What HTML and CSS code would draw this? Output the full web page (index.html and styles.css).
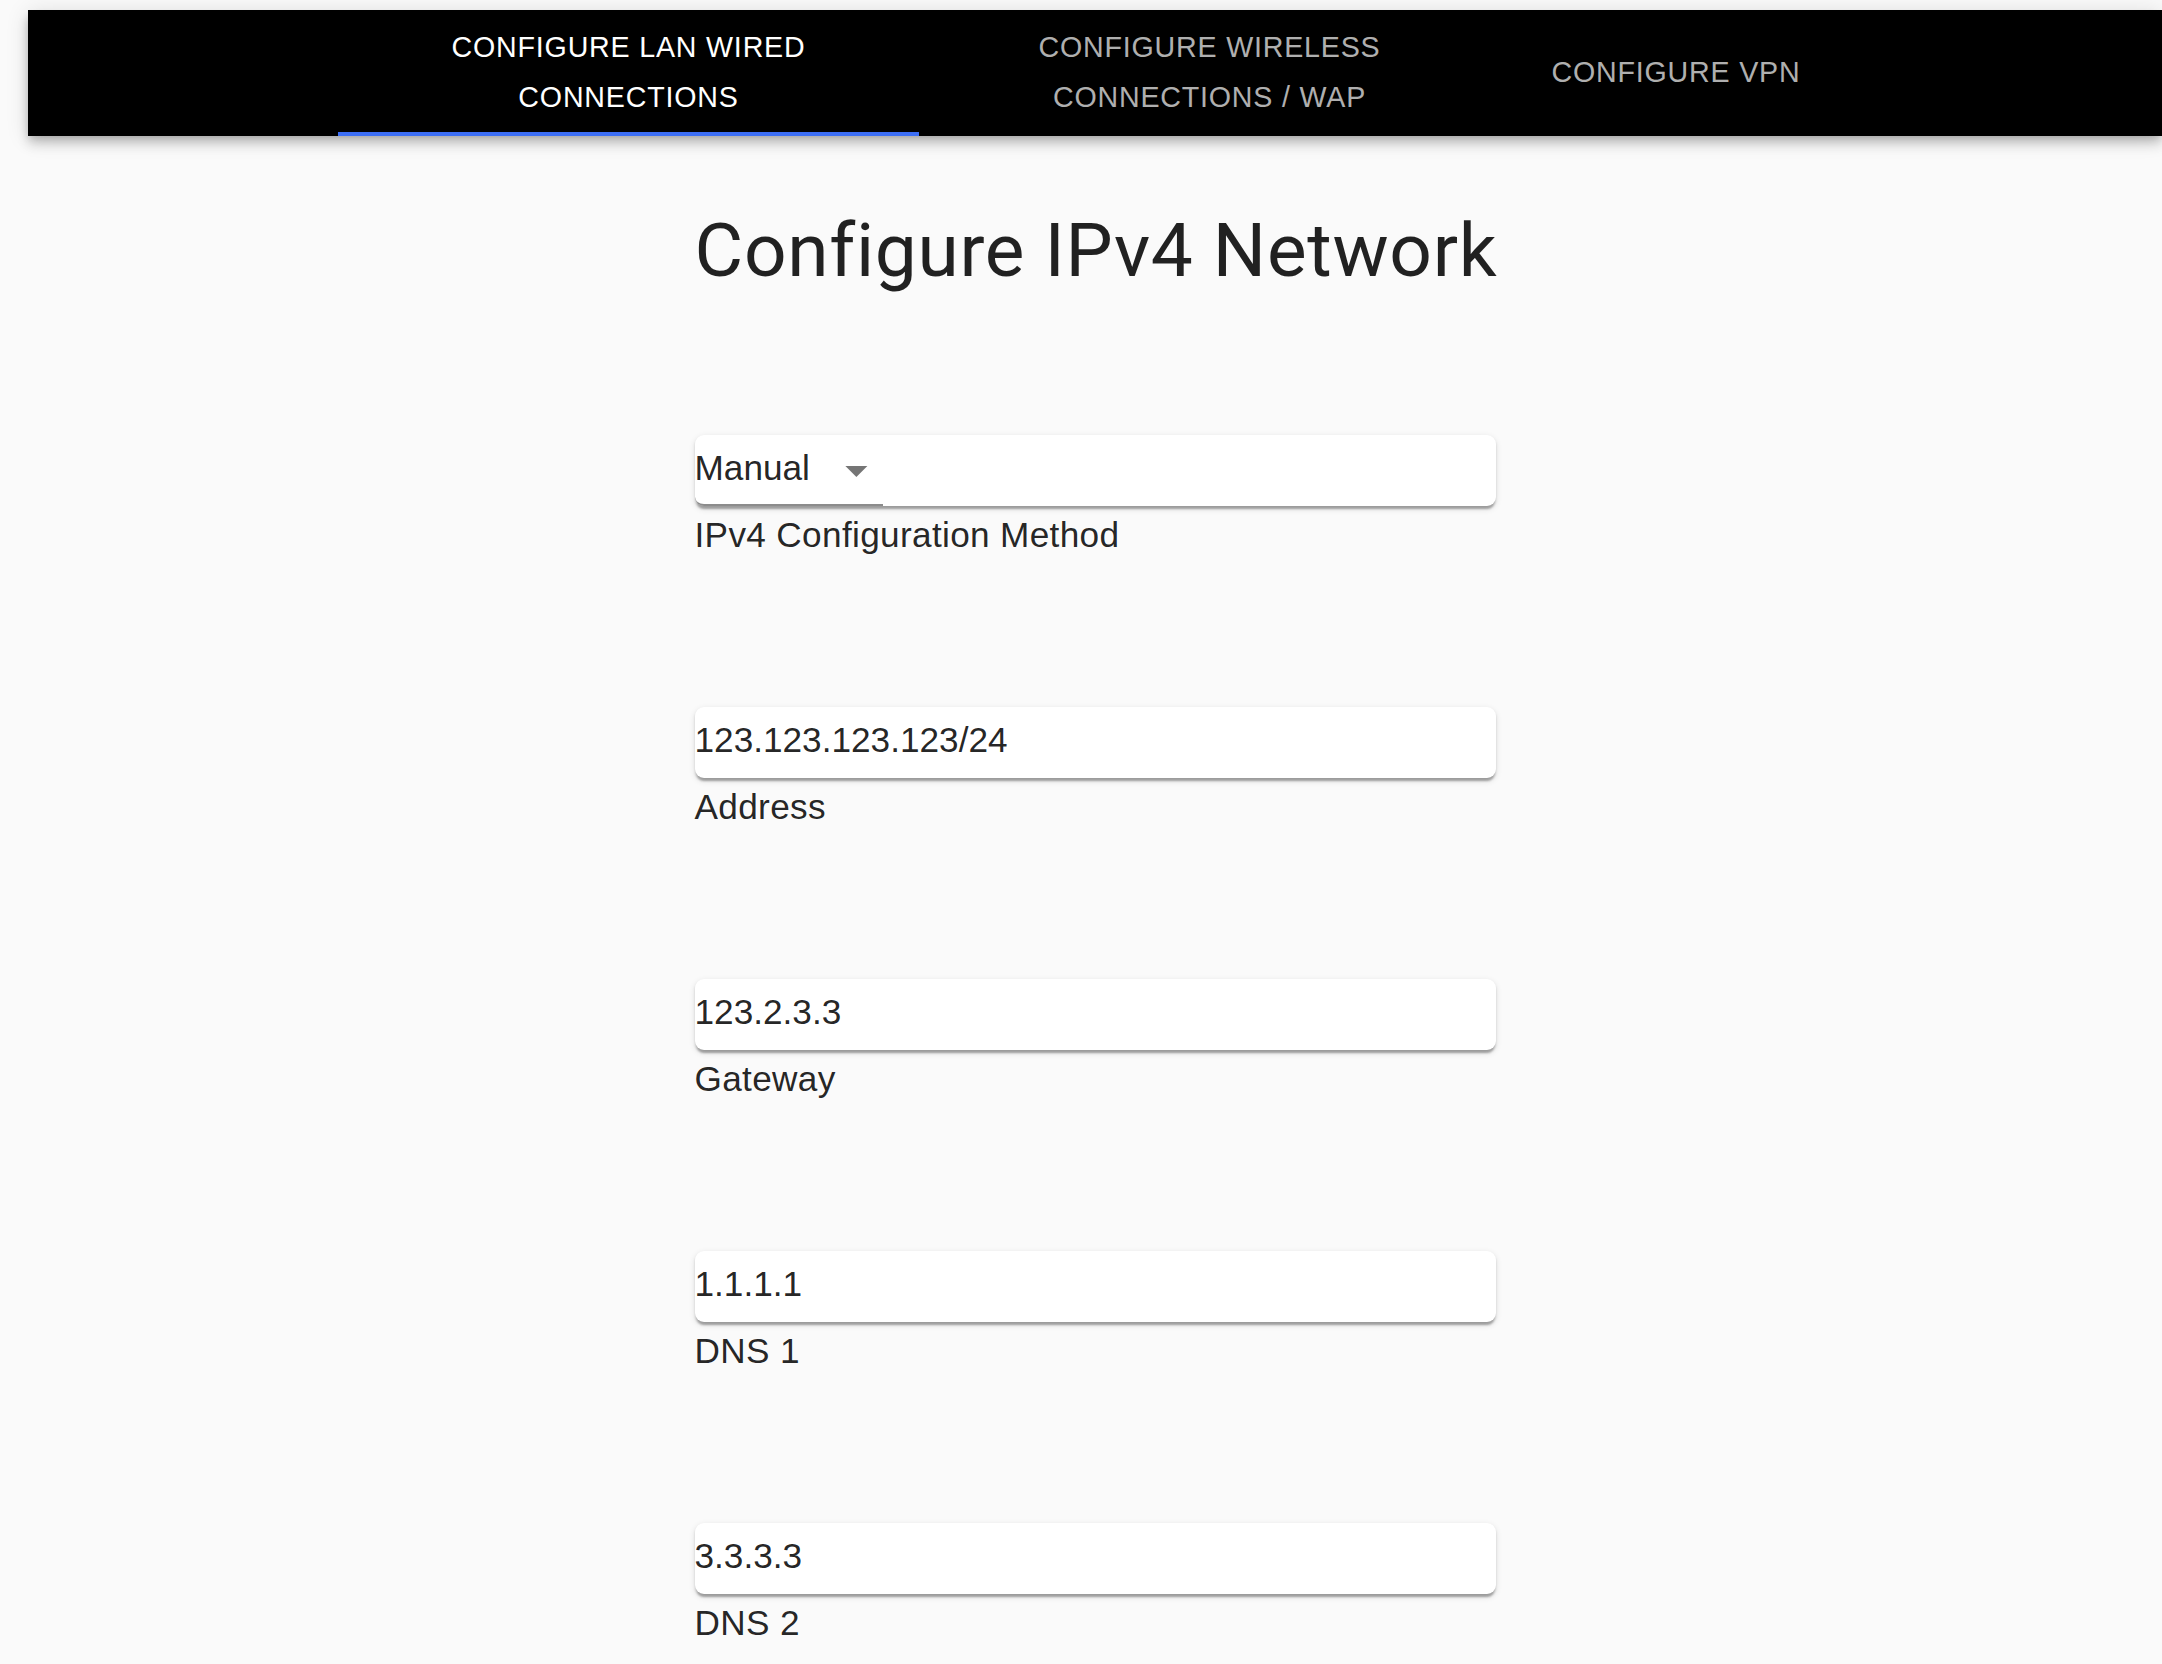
FILE: index.html
```html
<!DOCTYPE html>
<html lang="en">
<head>
<meta charset="utf-8">
<title>Configure IPv4 Network</title>
<link rel="stylesheet" href="styles.css">
</head>
<body>
<header class="appbar">
  <nav class="tabs">
    <button class="tab tab-wide active" type="button">CONFIGURE LAN WIRED CONNECTIONS<span class="indicator"></span></button>
    <button class="tab tab-wide" type="button">CONFIGURE WIRELESS CONNECTIONS / WAP</button>
    <button class="tab tab-narrow" type="button">CONFIGURE VPN</button>
  </nav>
</header>
<main class="content">
  <section class="form">
    <h1 class="title">Configure IPv4 Network</h1>

    <div class="field field-first">
      <div class="field-box">
        <div class="select">
          <span class="select-value">Manual</span>
          <svg class="select-icon" viewBox="0 0 24 24" aria-hidden="true"><path d="M7 10l5 5 5-5z"></path></svg>
        </div>
      </div>
      <div class="field-label">IPv4 Configuration Method</div>
    </div>

    <div class="field">
      <div class="field-box"><input class="field-input" type="text" value="123.123.123.123/24"></div>
      <div class="field-label">Address</div>
    </div>

    <div class="field">
      <div class="field-box"><input class="field-input" type="text" value="123.2.3.3"></div>
      <div class="field-label">Gateway</div>
    </div>

    <div class="field">
      <div class="field-box"><input class="field-input" type="text" value="1.1.1.1"></div>
      <div class="field-label">DNS 1</div>
    </div>

    <div class="field">
      <div class="field-box"><input class="field-input" type="text" value="3.3.3.3"></div>
      <div class="field-label">DNS 2</div>
    </div>
  </section>
</main>
</body>
</html>
```

FILE: styles.css
```css
html, body {
  margin: 0;
  padding: 0;
}

body {
  background: #fafafa;
  color: rgba(0, 0, 0, 0.87);
  font-family: "Liberation Sans", Arial, sans-serif;
  overflow: hidden;
}

.appbar {
  margin: 10px 0 0 28px;
  height: 126px;
  background: #000;
  box-shadow: 0 4.4px 8.8px -2.2px rgba(0, 0, 0, 0.2),
              0 8.8px 11px 0 rgba(0, 0, 0, 0.14),
              0 2.2px 22px 0 rgba(0, 0, 0, 0.12);
}

.tabs {
  display: flex;
  justify-content: center;
  height: 100%;
}

.tab {
  position: relative;
  box-sizing: border-box;
  height: 100%;
  padding: 12px 26.4px 14.4px;
  border: 0;
  background: none;
  display: flex;
  align-items: center;
  justify-content: center;
  text-align: center;
  font-family: "Liberation Sans", Arial, sans-serif;
  font-size: 28.6px;
  line-height: 50px;
  letter-spacing: 0.817px;
  color: rgba(255, 255, 255, 0.7);
  cursor: pointer;
}

.tab-wide {
  width: 581px;
}

.tab-narrow {
  width: 352px;
}

.tab.active {
  color: #fff;
}

.indicator {
  position: absolute;
  left: 0;
  right: 0;
  bottom: 0;
  height: 4.4px;
  background: #3c6ef5;
}

.content {
  padding-left: 28px;
  display: flex;
  justify-content: center;
}

.form {
  width: 801px;
}

.title {
  margin: 69px 0 0 0;
  font-family: Roboto, "Liberation Sans", sans-serif;
  font-weight: 400;
  font-size: 74.8px;
  line-height: 92.4px;
  letter-spacing: 0.7px;
  white-space: nowrap;
  color: rgba(0, 0, 0, 0.87);
}

.field {
  margin-top: 152px;
}

.field-first {
  margin-top: 137.5px;
}

.field-box {
  height: 71px;
  background: #fff;
  border-radius: 9px;
  box-shadow: 0 4.4px 2.2px -2.2px rgba(0, 0, 0, 0.2),
              0 2.2px 2.2px 0 rgba(0, 0, 0, 0.14),
              0 2.2px 6.6px 0 rgba(0, 0, 0, 0.12);
}

.select {
  position: relative;
  box-sizing: border-box;
  width: 188px;
  height: 71px;
  padding-top: 13.2px;
  border-bottom: 2.6px solid rgba(0, 0, 0, 0.45);
  border-bottom-left-radius: 9px;
}

.select-value {
  font-size: 35.2px;
  line-height: normal;
  color: rgba(0, 0, 0, 0.87);
}

.select-icon {
  position: absolute;
  right: 0;
  top: 9px;
  width: 52.8px;
  height: 52.8px;
  fill: rgba(0, 0, 0, 0.54);
}

.field-input {
  display: block;
  box-sizing: border-box;
  width: 100%;
  height: 71px;
  padding: 13.2px 0 18.5px;
  margin: 0;
  border: 0;
  outline: none;
  background: transparent;
  font-family: "Liberation Sans", Arial, sans-serif;
  font-size: 35.2px;
  color: rgba(0, 0, 0, 0.87);
}

.field-label {
  margin-top: 9px;
  font-size: 35.2px;
  line-height: 40px;
  letter-spacing: 0.33px;
  color: rgba(0, 0, 0, 0.87);
}
```
